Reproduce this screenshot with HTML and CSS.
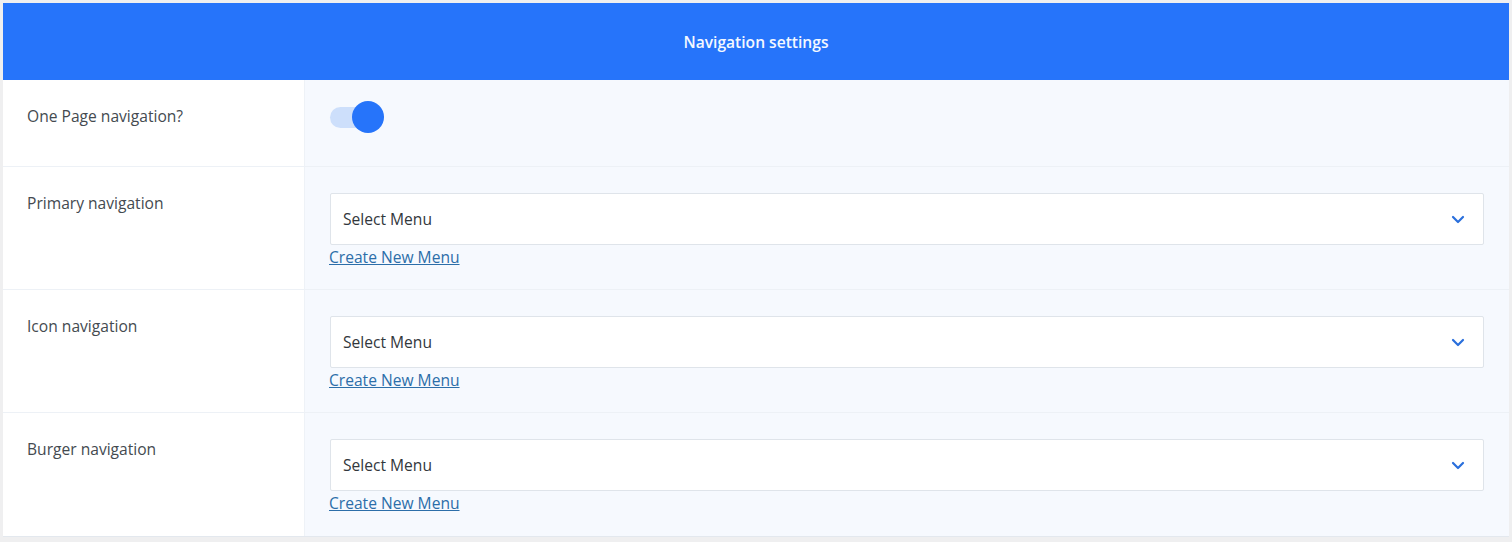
FILE: index.html
```html
<!DOCTYPE html>
<html lang="en">
<head>
    <meta charset="UTF-8">
    <meta name="viewport" content="width=device-width, initial-scale=1.0">
    <title>Navigation settings</title>
    <link rel="stylesheet" href="styles.css">
</head>
<body>
    <div class="panel">
        <div class="panel-head">Navigation settings</div>

        <div class="row row-short">
            <div class="label">One Page navigation?</div>
            <div class="field">
                <label class="toggle">
                    <span class="track"></span>
                    <span class="knob"></span>
                </label>
            </div>
        </div>

        <div class="row">
            <div class="label">Primary navigation</div>
            <div class="field">
                <div class="select">
                    <span>Select Menu</span>
                    <svg class="chev" width="14" height="9" viewBox="0 0 14 9"><path d="M2 2l5 5 5-5" fill="none" stroke="#2a6fdc" stroke-width="2.2" stroke-linecap="round" stroke-linejoin="round"/></svg>
                </div>
                <a href="#" class="new-menu">Create New Menu</a>
            </div>
        </div>

        <div class="row">
            <div class="label">Icon navigation</div>
            <div class="field">
                <div class="select">
                    <span>Select Menu</span>
                    <svg class="chev" width="14" height="9" viewBox="0 0 14 9"><path d="M2 2l5 5 5-5" fill="none" stroke="#2a6fdc" stroke-width="2.2" stroke-linecap="round" stroke-linejoin="round"/></svg>
                </div>
                <a href="#" class="new-menu">Create New Menu</a>
            </div>
        </div>

        <div class="row">
            <div class="label">Burger navigation</div>
            <div class="field">
                <div class="select">
                    <span>Select Menu</span>
                    <svg class="chev" width="14" height="9" viewBox="0 0 14 9"><path d="M2 2l5 5 5-5" fill="none" stroke="#2a6fdc" stroke-width="2.2" stroke-linecap="round" stroke-linejoin="round"/></svg>
                </div>
                <a href="#" class="new-menu">Create New Menu</a>
            </div>
        </div>
    </div>
</body>
</html>
```

FILE: styles.css
```css
body {
    margin: 0;
    padding: 3px 3px 0 3px;
    background: #efeff0;
    font-family: "Open Sans", "Noto Sans", sans-serif;
    font-size: 15.6px;
    color: #444a50;
}
.panel {
    background: #fff;
    border-bottom: 1px solid #e3e8ee;
}
.panel-head {
    background: #2674fa;
    color: #f4f8ff;
    font-weight: 600;
    text-align: center;
    height: 77px;
    line-height: 79px;
    font-size: 15.6px;
}
.row {
    display: grid;
    grid-template-columns: 301px 1fr;
    border-bottom: 1px solid #edf1f6;
    height: 123px;
    box-sizing: border-box;
}
.row:last-child {
    border-bottom: none;
}
.row-short {
    height: 87px;
}
.label {
    padding: 26px 24px 0 24px;
    line-height: 20px;
}
.field {
    background: #f6f9fe;
    border-left: 1px solid #eef2f7;
    padding: 26px 25px 0 25px;
}
.row-short .field {
    padding-top: 20px;
}
.toggle {
    display: flex;
    align-items: center;
    width: 56px;
    height: 34px;
    position: relative;
}
.track {
    width: 44px;
    height: 21px;
    border-radius: 11px;
    background: #cddffb;
}
.knob {
    position: absolute;
    left: 22px;
    top: 1px;
    width: 32px;
    height: 32px;
    border-radius: 50%;
    background: #2674fa;
}
.select {
    display: flex;
    align-items: center;
    justify-content: space-between;
    height: 50px;
    background: #fff;
    border: 1px solid #dfe4ea;
    border-radius: 2px;
    padding: 0 18px 0 12px;
    color: #32373c;
}
.chev {
    display: block;
}
.new-menu {
    display: inline-block;
    margin: 2px 0 0 -1px;
    color: #2c6ea9;
    text-decoration: underline;
    line-height: 20px;
}
```
